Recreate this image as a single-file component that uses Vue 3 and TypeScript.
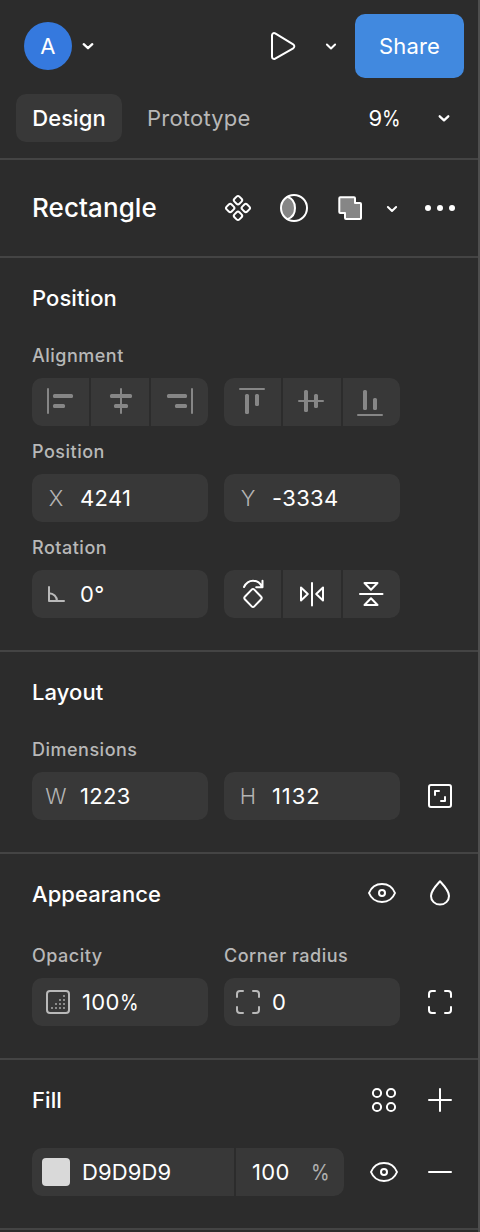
<script setup lang="ts">
import { ref } from 'vue'

type Tab = 'Design' | 'Prototype'

const tabs: Tab[] = ['Design', 'Prototype']
const activeTab = ref<Tab>('Design')
const zoom = ref(9)
const layer = ref({ name: 'Rectangle', x: 4241, y: -3334, rotation: 0, width: 1223, height: 1132 })
const look = ref({ opacity: 100, radius: 0, fill: 'D9D9D9', fillOpacity: 100 })
const diamonds: [number, number][] = [[16, 8.2], [16, 23.8], [8.2, 16], [23.8, 16]]
const dots: [number, number][] = [
  [18, 6], [14, 10], [18, 10], [10, 14], [14, 14], [18, 14], [6, 18], [10, 18], [14, 18], [18, 18],
]
</script>

<template>
  <main class="panel">
    <header class="top">
      <div class="bar">
        <div class="avatar">A</div>
        <svg class="chev-user" width="16" height="16" viewBox="0 0 16 16"><path class="ln bold" d="M3.7 6.2 8 10.2l4.3-4" /></svg>
        <svg class="play" width="32" height="32" viewBox="0 0 32 32"><path class="ln" d="M5 5.2v21.6c0 1.8 1.7 2.7 3.2 1.8l18-10.3c1.5-.9 1.5-3 0-3.9L8.2 3.4C6.7 2.5 5 3.4 5 5.2z" /></svg>
        <svg class="chev-play" width="16" height="16" viewBox="0 0 16 16"><path class="ln" d="M3.9 6.5 8 10.5l4.1-4" /></svg>
        <button class="share">Share</button>
      </div>
      <nav class="tabs">
        <button v-for="tab in tabs" :key="tab" class="tab" :class="{ active: tab === activeTab }" @click="activeTab = tab">{{ tab }}</button>
        <span class="zoom">{{ zoom }}<span class="pct">%</span></span>
        <svg class="chev-zoom" width="16" height="16" viewBox="0 0 16 16"><path class="ln bold" d="M3.7 6.3 8 10.3l4.3-4" /></svg>
      </nav>
    </header>

    <section class="layer">
      <h1>{{ layer.name }}</h1>
      <svg width="32" height="32" viewBox="0 0 32 32">
        <g class="ln">
          <rect v-for="[x, y] in diamonds" :key="`${x}-${y}`" :x="x - 3.5" :y="y - 3.5" width="7" height="7" rx="2" :transform="`rotate(45 ${x} ${y})`" />
        </g>
      </svg>
      <svg width="32" height="32" viewBox="0 0 32 32">
        <path class="shade" d="M10 4.5A13 13 0 0 0 10 27.5C14.5 26 17 21.5 17 16S14.5 6 10 4.5z" />
        <circle class="ln" cx="16" cy="16" r="13" />
        <path class="ln" d="M9.6 4.9C14.2 6.5 17 11 17 16s-2.8 9.5-7.4 11.1" />
      </svg>
      <svg width="32" height="32" viewBox="0 0 32 32"><path class="ln shade" d="M6.3 5.2h13.7a1 1 0 0 1 1 1V11h5a1 1 0 0 1 1 1v14a1 1 0 0 1-1 1H12a1 1 0 0 1-1-1v-5H6.3a1 1 0 0 1-1-1V6.2a1 1 0 0 1 1-1z" /></svg>
      <svg class="chev-bool" width="16" height="16" viewBox="0 0 16 16"><path class="ln" d="M3.9 7 8 11l4.1-4" /></svg>
      <svg width="32" height="32" viewBox="0 0 32 32"><g class="solid"><circle cx="4" cy="16" r="3" /><circle cx="16" cy="16" r="3" /><circle cx="28" cy="16" r="3" /></g></svg>
    </section>

    <section class="group">
      <div class="head"><h2>Position</h2></div>
      <div class="labels"><span>Alignment</span></div>
      <div class="row">
        <div class="segments muted">
          <button><svg width="57" height="48" viewBox="32 378 57 48"><rect x="47" y="388" width="2" height="26" rx="1" /><rect x="53" y="394" width="20" height="4" rx="1.5" /><rect x="53" y="404" width="12" height="4" rx="1.5" /></svg></button>
          <button><svg width="58" height="48" viewBox="91 378 58 48"><rect x="120" y="388" width="2" height="26" rx="1" /><rect x="110" y="394" width="22" height="4" rx="1.5" /><rect x="114" y="404" width="14" height="4" rx="1.5" /></svg></button>
          <button><svg width="57" height="48" viewBox="151 378 57 48"><rect x="191" y="388" width="2" height="26" rx="1" /><rect x="167" y="394" width="20" height="4" rx="1.5" /><rect x="175" y="404" width="12" height="4" rx="1.5" /></svg></button>
        </div>
        <div class="segments muted">
          <button><svg width="57" height="48" viewBox="224 378 57 48"><rect x="239" y="388" width="26" height="2" rx="1" /><rect x="245" y="394" width="4" height="20" rx="1.5" /><rect x="255" y="394" width="4" height="12" rx="1.5" /></svg></button>
          <button><svg width="58" height="48" viewBox="283 378 58 48"><rect x="298" y="400" width="26" height="2" rx="1" /><rect x="304" y="390" width="4" height="22" rx="1.5" /><rect x="314" y="394" width="4" height="14" rx="1.5" /></svg></button>
          <button><svg width="57" height="48" viewBox="343 378 57 48"><rect x="357" y="414" width="26" height="2" rx="1" /><rect x="363" y="390" width="4" height="20" rx="1.5" /><rect x="373" y="398" width="4" height="12" rx="1.5" /></svg></button>
        </div>
      </div>
      <div class="labels next"><span>Position</span></div>
      <div class="row">
        <div class="field"><i>X</i><span>{{ layer.x }}</span></div>
        <div class="field"><i>Y</i><span>{{ layer.y }}</span></div>
      </div>
      <div class="labels next"><span>Rotation</span></div>
      <div class="row">
        <div class="field">
          <svg width="48" height="48" viewBox="0 0 48 48"><path class="ln dim" d="M17 17v14h15M17 23.2c4.5 0 8 3.5 8 7.8" /></svg>
          <span>{{ layer.rotation }}°</span>
        </div>
        <div class="segments">
          <button><svg width="57" height="48" viewBox="224 570 57 48"><path class="ln" d="M244 587c2-4 5.2-6.2 9-6.2s7 2 9 6M262.5 580.8v6.4h-6.3M251.7 589.6l-6.9 7.1a1.8 1.8 0 0 0 0 2.6l6.9 7.1a1.8 1.8 0 0 0 2.6 0l6.9-7.1a1.8 1.8 0 0 0 0-2.6l-6.9-7.1a1.8 1.8 0 0 0-2.6 0z" /></svg></button>
          <button><svg width="58" height="48" viewBox="283 570 58 48"><path class="ln" d="M312 583v22.5M301 587.5v13l6.8-6.5zM323 587.5v13l-6.8-6.5z" /></svg></button>
          <button><svg width="57" height="48" viewBox="343 570 57 48"><path class="ln" d="M360 594h22.5M364.5 583h13l-6.5 6.8zM364.5 605h13l-6.5-6.8z" /></svg></button>
        </div>
      </div>
    </section>

    <section class="group">
      <div class="head"><h2>Layout</h2></div>
      <div class="labels"><span>Dimensions</span></div>
      <div class="row">
        <div class="field"><i>W</i><span>{{ layer.width }}</span></div>
        <div class="field"><i>H</i><span class="loose">{{ layer.height }}</span></div>
        <svg class="side" width="32" height="32" viewBox="0 0 32 32"><rect class="ln" x="5" y="5" width="22" height="22" rx="2" /><path class="ln" d="M11 15v-4h4M17 21h4v-4" /></svg>
      </div>
    </section>

    <section class="group">
      <div class="head tall">
        <h2>Appearance</h2>
        <svg class="eye-head" width="32" height="32" viewBox="0 0 32 32"><path class="ln" d="M3 16c2.3-5.7 7.2-9 13-9s10.7 3.3 13 9c-2.3 5.7-7.2 9-13 9S5.3 21.7 3 16z" /><circle class="ln" cx="16" cy="16" r="3" /></svg>
        <svg class="drop" width="32" height="32" viewBox="0 0 32 32"><path class="ln" d="M16 4.3C11.5 9.2 7 13.7 7 18.9c0 5 4 8.7 9 8.7s9-3.7 9-8.7c0-5.2-4.5-9.7-9-14.6z" /></svg>
      </div>
      <div class="labels"><span>Opacity</span><span>Corner radius</span></div>
      <div class="row">
        <div class="field">
          <svg class="opacity-icon" width="24" height="24" viewBox="0 0 24 24">
            <rect class="ln dim" x="1" y="1" width="22" height="22" rx="3" />
            <g class="dots">
              <rect v-for="[x, y] in dots" :key="`${x}-${y}`" :x="x - 1" :y="y - 1" width="2" height="2" />
            </g>
          </svg>
          <span>{{ look.opacity }}<span class="pct">%</span></span>
        </div>
        <div class="field">
          <svg width="48" height="48" viewBox="0 0 48 48"><path class="ln dim" d="M13 19v-3a3 3 0 0 1 3-3h3M29 13h3a3 3 0 0 1 3 3v3M35 29v3a3 3 0 0 1-3 3h-3M19 35h-3a3 3 0 0 1-3-3v-3" /></svg>
          <span>{{ look.radius }}</span>
        </div>
        <svg class="side" width="32" height="32" viewBox="0 0 32 32"><path class="ln" d="M5 11V8a3 3 0 0 1 3-3h3M21 5h3a3 3 0 0 1 3 3v3M27 21v3a3 3 0 0 1-3 3h-3M11 27H8a3 3 0 0 1-3-3v-3" /></svg>
      </div>
    </section>

    <section class="group">
      <div class="head fill-head">
        <h2>Fill</h2>
        <svg width="32" height="32" viewBox="0 0 32 32"><g class="ln"><circle cx="9" cy="9" r="4.1" /><circle cx="23" cy="9" r="4.1" /><circle cx="9" cy="23" r="4.1" /><circle cx="23" cy="23" r="4.1" /></g></svg>
        <svg width="32" height="32" viewBox="0 0 32 32"><path class="ln" d="M16 5v22M5 16h22" /></svg>
      </div>
      <div class="row fill-row">
        <div class="fill">
          <div class="color"><b class="swatch"></b><span>{{ look.fill }}</span></div>
          <div class="alpha"><span>{{ look.fillOpacity }}</span><em class="pct">%</em></div>
        </div>
        <svg width="32" height="32" viewBox="0 0 32 32"><path class="ln" d="M3 16c2.3-5.7 7.2-9 13-9s10.7 3.3 13 9c-2.3 5.7-7.2 9-13 9S5.3 21.7 3 16z" /><circle class="ln" cx="16" cy="16" r="3" /></svg>
        <svg width="32" height="32" viewBox="0 0 32 32"><path class="ln" d="M5 16h22" /></svg>
      </div>
    </section>
  </main>
</template>

<style>
html,
body {
  background: #2c2c2c;
}
</style>

<style scoped>
.panel {
  box-sizing: border-box;
  width: 480px;
  height: 1232px;
  overflow: hidden;
  border-right: 2px solid #4e4e4e;
  background: #2c2c2c;
  color: #fff;
  font: 400 22px/28px Inter, "Liberation Sans", sans-serif;
  letter-spacing: 0.11px;
}
button {
  padding: 0;
  border: 0;
  color: inherit;
  font: inherit;
  letter-spacing: inherit;
}
svg {
  display: block;
  flex: none;
}
.ln {
  fill: none;
  stroke: #fff;
  stroke-width: 2;
  stroke-linecap: round;
  stroke-linejoin: round;
}
.bold {
  stroke-width: 2.3;
}
.dim {
  stroke: #b9b9b9;
}
.shade {
  fill: #868686;
}
.solid {
  fill: #fff;
}
.dots {
  fill: #8c8c8c;
}
.pct {
  display: inline-block;
  margin-right: -3px;
  transform: scaleX(0.86);
  transform-origin: left;
}
.top,
.layer,
.group {
  box-sizing: border-box;
  border-bottom: 2px solid #444;
}
.top {
  height: 160px;
}
.bar {
  display: flex;
  align-items: center;
  height: 64px;
  padding: 14px 14px 0 24px;
}
.avatar {
  width: 48px;
  border-radius: 50%;
  background: #3579de;
  line-height: 48px;
  text-align: center;
}
.chev-user {
  margin-left: 8px;
}
.play {
  margin-left: auto;
}
.chev-play {
  margin: 0 16px 0 24px;
}
.share {
  width: 109px;
  height: 64px;
  border-radius: 10px;
  background: #4189df;
}
.tabs {
  display: flex;
  align-items: center;
  padding: 16px 26px 0 16px;
}
.tab {
  height: 48px;
  padding: 0 9px;
  border-radius: 10px;
  background: none;
  color: #b8b8b8;
  letter-spacing: 0.22px;
}
.tab.active {
  width: 106px;
  margin-right: 16px;
  padding: 0;
  background: #383838;
  color: #fff;
  font-weight: 500;
  letter-spacing: 0.11px;
}
.zoom {
  margin-left: auto;
}
.chev-zoom {
  margin-left: 35px;
}
.layer {
  display: flex;
  align-items: center;
  gap: 24px;
  height: 98px;
  padding: 0 22px 0 32px;
}
h1,
h2 {
  flex: 1;
  margin: 0;
  font-size: 22px;
  font-weight: 500;
  letter-spacing: 0.08px;
}
h1 {
  font-size: 26px;
}
.chev-bool {
  margin-left: -6px;
}
.group {
  padding: 0 22px 32px 32px;
}
.head {
  display: flex;
  align-items: center;
  gap: 24px;
  height: 80px;
}
.tall {
  padding-bottom: 4px;
}
.eye-head {
  margin: 0 2px 2px 0;
}
.drop {
  margin-bottom: 2px;
}
.fill-head {
  padding-bottom: 8px;
}
.labels {
  display: grid;
  grid-template-columns: 192px 1fr;
  height: 40px;
  color: #b8b8b8;
  font-size: 18px;
  font-weight: 450;
  letter-spacing: 0.5px;
  line-height: 36px;
}
.next {
  margin-top: 8px;
}
.tall {
  box-sizing: border-box;
  height: 84px;
}
.row {
  display: flex;
  align-items: center;
  gap: 16px;
  height: 48px;
}
.side {
  margin-left: 8px;
}
.field {
  display: flex;
  align-items: center;
  width: 176px;
  height: 48px;
  border-radius: 10px;
  background: #383838;
  letter-spacing: 0.35px;
}
.loose {
  letter-spacing: 0.9px;
}
.field i {
  width: 48px;
  color: #b4b4b4;
  font-style: normal;
  font-weight: 360;
  letter-spacing: 0;
  text-align: center;
}
.opacity-icon {
  margin: 0 12px 0 14px;
}
.segments {
  display: grid;
  grid-template-columns: 57px 58px 57px;
  gap: 2px;
  overflow: hidden;
  border-radius: 10px;
}
.segments button {
  height: 48px;
  background: #383838;
}
.muted {
  fill: #868686;
}
.fill-row {
  gap: 24px;
}
.fill {
  display: flex;
  width: 312px;
  height: 48px;
  border-radius: 10px;
  background: #383838;
}
.color,
.alpha {
  display: flex;
  align-items: center;
}
.color {
  box-sizing: border-box;
  width: 204px;
  padding-left: 10px;
  border-right: 2px solid #2c2c2c;
}
.swatch {
  width: 28px;
  height: 28px;
  margin-right: 12px;
  border-radius: 4px;
  background: #d9d9d9;
}
.alpha {
  flex: 1;
  justify-content: space-between;
  padding: 0 14px 0 16px;
  letter-spacing: 0.3px;
}
.alpha em {
  color: #b0b0b0;
  font-style: normal;
}
</style>
